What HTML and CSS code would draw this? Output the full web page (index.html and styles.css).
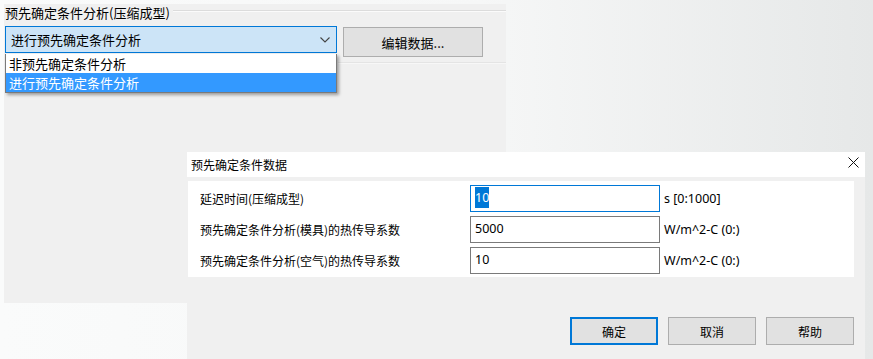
FILE: index.html
```html
<!DOCTYPE html>
<html lang="zh-CN">
<head>
    <meta charset="UTF-8">
    <meta name="viewport" content="width=device-width, initial-scale=1.0">
    <title>预先确定条件数据</title>
    <link rel="stylesheet" href="styles.css">
</head>
<body>
    <div class="panel">
        <div class="group-head">
            <span class="group-title">预先确定条件分析(压缩成型)</span>
            <span class="group-line"></span>
        </div>
        <div class="controls">
            <div class="combo">
                <span class="combo-text">进行预先确定条件分析</span>
                <svg class="chevron" width="10" height="6" viewBox="0 0 10 6">
                    <polyline points="0.5,0.5 5,5 9.5,0.5" fill="none" stroke="#444" stroke-width="1.1"/>
                </svg>
            </div>
            <button type="button" class="btn btn-edit">编辑数据...</button>
        </div>
        <div class="separator"></div>

        <ul class="dropdown">
            <li class="option">非预先确定条件分析</li>
            <li class="option selected">进行预先确定条件分析</li>
        </ul>
    </div>

    <div class="dialog">
        <div class="dialog-title">
            <span>预先确定条件数据</span>
            <svg class="close" width="11" height="11" viewBox="0 0 11 11">
                <line x1="0.5" y1="0.5" x2="10.5" y2="10.5" stroke="#111" stroke-width="1"/>
                <line x1="10.5" y1="0.5" x2="0.5" y2="10.5" stroke="#111" stroke-width="1"/>
            </svg>
        </div>
        <div class="dialog-body">
            <div class="fields">
                <div class="field-row">
                    <span class="field-label">延迟时间(压缩成型)</span>
                    <div class="field-input focused"><span class="sel">10</span></div>
                    <span class="field-unit">s [0:1000]</span>
                </div>
                <div class="field-row">
                    <span class="field-label">预先确定条件分析(模具)的热传导系数</span>
                    <div class="field-input">5000</div>
                    <span class="field-unit">W/m^2-C (0:)</span>
                </div>
                <div class="field-row">
                    <span class="field-label">预先确定条件分析(空气)的热传导系数</span>
                    <div class="field-input">10</div>
                    <span class="field-unit">W/m^2-C (0:)</span>
                </div>
            </div>
            <div class="dialog-buttons">
                <button type="button" class="btn btn-dlg default">确定</button>
                <button type="button" class="btn btn-dlg">取消</button>
                <button type="button" class="btn btn-dlg">帮助</button>
            </div>
        </div>
    </div>
</body>
</html>
```

FILE: styles.css
```css
body {
    margin: 0;
    width: 873px;
    height: 359px;
    overflow: hidden;
    position: relative;
    background: linear-gradient(to right, #fafbfb 0%, #f6f7f7 55%, #e6e8e8 100%);
    font-family: "Noto Sans CJK SC", sans-serif;
    color: #000;
}

/* top window (combo box + edit button) */

.panel {
    position: relative;
    margin: 4px 0 0 4px;
    width: 501px;
    height: 299px;
    padding-left: 1px;
    background-color: #f0f0f0;
}

.group-head {
    display: flex;
    align-items: center;
    height: 18px;
    font-size: 13px;
    line-height: 18px;
}

.group-title {
    padding-right: 3px;
    white-space: nowrap;
}

.group-line {
    flex: 1;
    margin-top: -4px;
    border-top: 1px solid #dcdcdc;
    border-bottom: 1px solid #fbfbfb;
}

.controls {
    display: flex;
    align-items: flex-start;
    margin-top: 4px;
}

.combo {
    display: flex;
    align-items: center;
    justify-content: space-between;
    box-sizing: border-box;
    width: 332px;
    height: 27px;
    padding: 0 6px 0 5px;
    border: 1px solid #0078d7;
    background-color: #cce4f7;
    font-size: 13px;
}

.chevron {
    margin-top: 1px;
}

.btn {
    box-sizing: border-box;
    border: 1px solid #adadad;
    background-color: #e1e1e1;
    font-family: "Noto Sans CJK SC", sans-serif;
    color: #000;
    padding: 0;
}

.btn-edit {
    margin: 1px 0 0 6px;
    width: 140px;
    height: 30px;
    font-size: 13px;
}

.separator {
    margin: 5px 0 0 333px;
    border-top: 1px solid #e4e4e4;
    border-bottom: 1px solid #f7f7f7;
}

.dropdown {
    position: absolute;
    top: 50px;
    left: 1px;
    width: 332px;
    margin: 0;
    padding: 0;
    list-style: none;
    box-sizing: border-box;
    border: 1px solid #7a7a7a;
    border-top: none;
    background-color: #fff;
    box-shadow: 2px 2px 3px rgba(0, 0, 0, 0.35);
    font-size: 13px;
}

.option {
    height: 19px;
    line-height: 19px;
    padding-left: 3px;
}

.option.selected {
    background-color: #3399ff;
    color: #fff;
}

/* data dialog, a window lying over the desktop */

.dialog {
    position: absolute;
    left: 187px;
    top: 152px;
    width: 678px;
    height: 207px;
    background-color: #f0f0f0;
    font-size: 12px;
}

.dialog-title {
    display: flex;
    align-items: center;
    justify-content: space-between;
    height: 25px;
    padding: 0 4px 0 4px;
    background-color: #fff;
    line-height: 25px;
}

.close {
    margin: -5px 2px 0 0;
}

.dialog-body {
    padding: 4px 11px 0 1px;
}

.fields {
    display: flex;
    flex-direction: column;
    gap: 4px;
    padding: 4px 0 3px 12px;
    background-color: #fff;
}

.field-row {
    display: grid;
    grid-template-columns: 270px 190px auto;
    align-items: center;
    height: 27px;
}

.field-label {
    white-space: nowrap;
}

.field-input {
    box-sizing: border-box;
    height: 27px;
    padding-left: 4px;
    border: 1px solid #7a7a7a;
    background-color: #fff;
    font-family: "Noto Sans", sans-serif;
    font-size: 12.5px;
    line-height: 24px;
}

.field-input.focused {
    border-color: #0078d7;
}

.sel {
    background-color: #0078d7;
    color: #fff;
    padding: 2px 0;
}

.field-unit {
    padding-left: 4px;
    font-family: "Noto Sans", sans-serif;
    font-size: 12.5px;
    white-space: nowrap;
}

.dialog-buttons {
    display: flex;
    justify-content: flex-end;
    gap: 10px;
    margin-top: 40px;
}

.btn-dlg {
    width: 88px;
    height: 28px;
    font-size: 12px;
}

.btn-dlg.default {
    border: 2px solid #0078d7;
}
```
